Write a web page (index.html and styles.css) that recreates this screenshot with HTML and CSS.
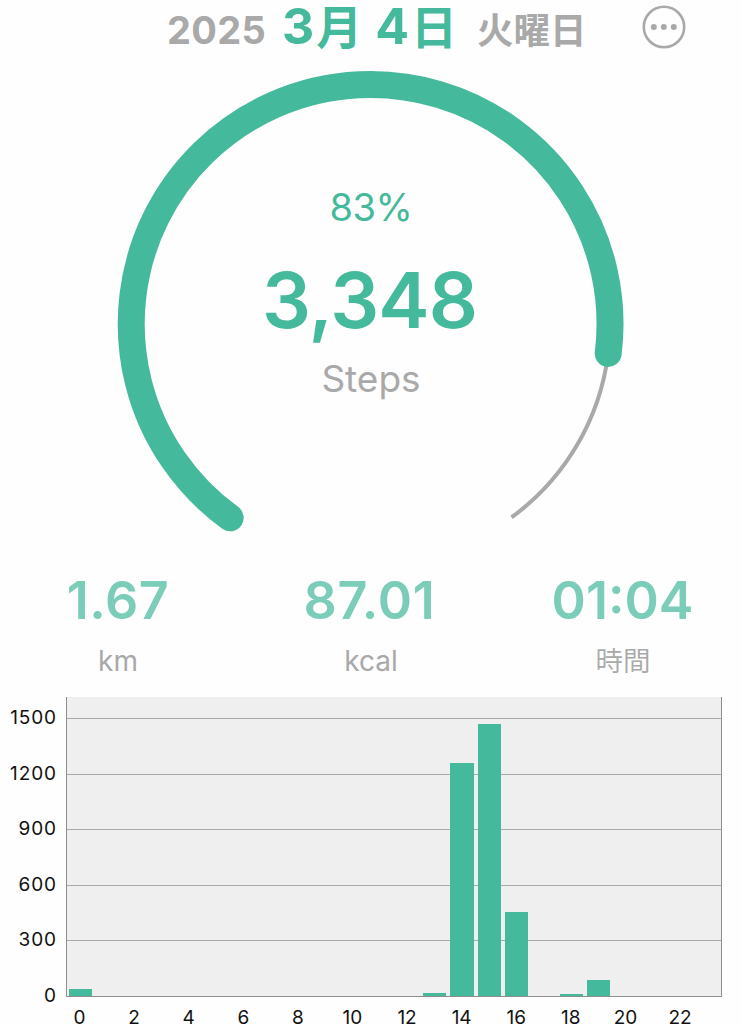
FILE: index.html
```html
<!DOCTYPE html>
<html lang="ja">
<head>
    <meta charset="UTF-8">
    <meta name="viewport" content="width=device-width, initial-scale=1.0">
    <title>Steps</title>
    <link rel="stylesheet" href="styles.css">
</head>
<body>

    <header>
        <span class="year">2025</span>
        <h1 class="date"><span class="num">3</span><span class="kanji month">月</span><span class="num">4</span><span class="kanji">日</span></h1>
        <span class="weekday">火曜日</span>
        <button class="menu-btn" aria-label="Menu">
            <svg width="44" height="44" viewBox="0 0 44 44">
                <circle cx="22" cy="22" r="20.2" fill="none" stroke="#a9a9a9" stroke-width="2.6"/>
                <circle cx="11.8" cy="22" r="3" fill="#a9a9a9"/>
                <circle cx="21.8" cy="22" r="3" fill="#a9a9a9"/>
                <circle cx="31.8" cy="22" r="3" fill="#a9a9a9"/>
            </svg>
        </button>
    </header>

    <main>
        <!-- Progress ring -->
        <section class="gauge">
            <svg class="ring" width="742" height="500" viewBox="0 60 742 500">
                <path d="M608.2 353.2 A239.2 239.2 0 0 1 511.5 517.4" fill="none" stroke="#a9a9a9" stroke-width="4"/>
                <path d="M230.2 517.8 A239.4 239.4 0 1 1 608.2 353.4" fill="none" stroke="#45b99c" stroke-width="27" stroke-linecap="round"/>
            </svg>
            <div class="gauge-text">
                <div class="percent">83%</div>
                <div class="steps">3,348</div>
                <div class="steps-label">Steps</div>
            </div>
        </section>

        <section class="stats">
            <div class="stat">
                <div class="value km">1.67</div>
                <div class="unit">km</div>
            </div>
            <div class="stat">
                <div class="value kcal">87.01</div>
                <div class="unit">kcal</div>
            </div>
            <div class="stat">
                <div class="value time">01:04</div>
                <div class="unit jp">時間</div>
            </div>
        </section>

        <!-- Steps per hour -->
        <section class="chart">
            <div class="y-axis">
                <span>1500</span>
                <span>1200</span>
                <span>900</span>
                <span>600</span>
                <span>300</span>
                <span>0</span>
            </div>
            <div class="plot">
                <div class="bar" style="height: 7.3px"></div>
                <div class="bar"></div>
                <div class="bar"></div>
                <div class="bar"></div>
                <div class="bar"></div>
                <div class="bar"></div>
                <div class="bar"></div>
                <div class="bar"></div>
                <div class="bar"></div>
                <div class="bar"></div>
                <div class="bar"></div>
                <div class="bar"></div>
                <div class="bar"></div>
                <div class="bar" style="height: 3.3px"></div>
                <div class="bar" style="height: 233px"></div>
                <div class="bar" style="height: 272px"></div>
                <div class="bar" style="height: 84.3px"></div>
                <div class="bar"></div>
                <div class="bar" style="height: 2px"></div>
                <div class="bar" style="height: 16px"></div>
                <div class="bar"></div>
                <div class="bar"></div>
                <div class="bar"></div>
                <div class="bar"></div>
            </div>
            <div class="x-axis">
                <span>0</span>
                <span>2</span>
                <span>4</span>
                <span>6</span>
                <span>8</span>
                <span>10</span>
                <span>12</span>
                <span>14</span>
                <span>16</span>
                <span>18</span>
                <span>20</span>
                <span>22</span>
            </div>
        </section>
    </main>

</body>
</html>
```
FILE: styles.css
```css
body {
    font-family: Inter, "Noto Sans CJK JP", sans-serif;
    margin: 0;
    width: 742px;
    height: 1024px;
    overflow: hidden;
    background-color: #fefefe;
    color: #a9a9a9;
}
header {
    display: flex;
    align-items: flex-start;
    box-sizing: border-box;
    height: 60px;
    padding-left: 167px;
    white-space: nowrap;
}
.year {
    width: 115px;
    font-size: 38px;
    font-weight: 700;
    letter-spacing: 0.3px;
    line-height: 60px;
}
.date {
    display: flex;
    align-items: flex-start;
    width: 195px;
    margin: 0;
    color: #45b99c;
    font-size: 50px;
    font-weight: 700;
    line-height: 53px;
}
.kanji {
    margin-left: 2px;
    font-family: "Noto Sans CJK JP", sans-serif;
    font-size: 46px;
    line-height: 49px;
}
.month {
    margin-right: 13px;
}
.weekday {
    width: 165px;
    font-family: "Noto Sans CJK JP", sans-serif;
    font-size: 36.5px;
    font-weight: 700;
    line-height: 58px;
}
.menu-btn {
    width: 44px;
    height: 44px;
    margin-top: 5px;
    padding: 0;
    border: none;
    background: none;
}
.menu-btn svg {
    display: block;
}
.gauge {
    display: grid;
    height: 500px;
}
.ring, .gauge-text {
    grid-area: 1 / 1;
}
.gauge-text {
    padding-top: 122px;
    text-align: center;
}
.percent {
    height: 50px;
    color: #45b99c;
    font-size: 38px;
    font-weight: 400;
    letter-spacing: -0.4px;
    line-height: 50px;
}
.steps {
    height: 136px;
    color: #45b99c;
    font-size: 77px;
    font-weight: 600;
    letter-spacing: -0.9px;
    line-height: 136px;
    padding-right: 3px;
}
.steps-label {
    margin-top: -14px;
    font-size: 37px;
    line-height: 49px;
}
.stats {
    display: grid;
    grid-template-columns: 236px 270px 236px;
    height: 137px;
    text-align: center;
}
.value {
    color: #7bcdb9;
    font-size: 52px;
    font-weight: 600;
    line-height: 82px;
}
.km {
    letter-spacing: 0.6px;
}
.kcal {
    letter-spacing: 0.8px;
    padding-right: 3px;
}
.time {
    padding-right: 3px;
}
.unit {
    font-size: 28px;
    font-weight: 400;
    line-height: 38px;
}
.jp {
    font-family: "Noto Sans CJK JP", sans-serif;
    font-size: 27.5px;
    font-weight: 350;
    line-height: 35px;
    padding-right: 2px;
}
.chart {
    display: grid;
    grid-template-columns: 66px 656px;
    grid-template-rows: 300px 27px;
    color: #111;
    font-size: 19px;
}
.y-axis {
    display: flex;
    flex-direction: column;
    padding: 7px 9px 0 0;
    text-align: right;
    letter-spacing: 0.9px;
}
.y-axis span {
    height: 55.6px;
    line-height: 28px;
    flex-shrink: 0;
}
.plot {
    display: flex;
    align-items: flex-end;
    justify-content: space-between;
    box-sizing: border-box;
    padding: 0 1.5px;
    border: 1px solid #8e8e8e;
    border-top: none;
    background: repeating-linear-gradient(to top, transparent 0 54.6px, #a9a9a9 54.6px 55.6px) #efefef;
}
.bar {
    width: 23.2px;
    background-color: #45b99c;
}
.x-axis {
    grid-column: 2;
    display: grid;
    grid-template-columns: repeat(12, 54.6px);
}
.x-axis span {
    width: 27px;
    text-align: center;
    line-height: 41px;
}
```
